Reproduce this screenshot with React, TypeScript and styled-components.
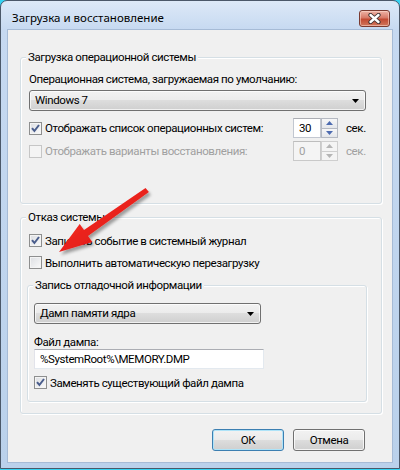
import React from 'react';
import styled, { createGlobalStyle } from 'styled-components';

const GlobalStyle = createGlobalStyle`
  html, body { margin: 0; padding: 0; }
  body {
    width: 400px;
    height: 470px;
    overflow: hidden;
    background: #35d3f2;
    font-family: Roboto, "Noto Sans", "Liberation Sans", sans-serif;
    font-size: 11.5px;
    letter-spacing: -0.4px;
    color: #000;
  }
  * { box-sizing: border-box; }
`;

const Page = styled.div`
  position: relative;
  width: 400px;
  height: 470px;
`;

const Window = styled.div`
  width: 400px;
  height: 469px;
  border: 1px solid #4b5869;
  border-radius: 7px 7px 0 0;
  background: linear-gradient(#dde9f7, #c6d9f1 29px, #bad1eb);
  display: flex;
  flex-direction: column;
  padding: 0 7px 6px 7px;
`;

const TitleBar = styled.div`
  height: 29px;
  display: flex;
  align-items: flex-start;
  justify-content: space-between;
  padding: 9px 2px 0 4px;
`;

const Title = styled.div`
  font-family: "Noto Sans", sans-serif;
  font-size: 11.5px;
  letter-spacing: 0;
  line-height: 16px;
  color: #000;
`;

const CloseButton = styled.div`
  width: 31px;
  height: 17px;
  border: 1px solid #7a3a30;
  border-radius: 3px;
  background: linear-gradient(#eeb3a6, #d77a68 45%, #c24a33 55%, #d0765c);
  box-shadow: inset 0 0 0 1px rgba(255, 220, 210, 0.55);
  display: flex;
  align-items: center;
  justify-content: center;
`;

const Content = styled.div`
  flex: 1;
  background: #f0f0f0;
  box-shadow: 0 0 0 1px #a6bbd6;
  display: flex;
  flex-direction: column;
  padding: 27px 10px 11px 12px;
`;

const GroupBox = styled.div<{ $mt?: number }>`
  margin-top: ${({ $mt }) => $mt ?? 0}px;
  border: 1px solid #d5dfe5;
  border-radius: 3px;
  box-shadow: inset 1px 1px 0 #fff, 1px 1px 0 #fff;
  display: flex;
  flex-direction: column;
`;

const Legend = styled.div`
  align-self: flex-start;
  margin: -8px 0 0 5px;
  padding: 0 2px;
  background: #f0f0f0;
  line-height: 15px;
`;

const GroupBody = styled.div<{ $pad: string }>`
  display: flex;
  flex-direction: column;
  padding: ${({ $pad }) => $pad};
`;

const Label = styled.div<{ $mt?: number; $lh?: number }>`
  margin-top: ${({ $mt }) => $mt ?? 0}px;
  line-height: ${({ $lh }) => $lh ?? 15}px;
  height: ${({ $lh }) => $lh ?? 15}px;
  white-space: nowrap;
`;

const Select = styled.div<{ $width: number; $mt?: number }>`
  margin-top: ${({ $mt }) => $mt ?? 0}px;
  width: ${({ $width }) => $width}px;
  height: 21px;
  border: 1px solid #707070;
  border-radius: 3px;
  background: linear-gradient(#f2f2f2, #ebebeb 50%, #dddddd 50%, #cfcfcf);
  box-shadow: inset 0 0 0 1px rgba(255, 255, 255, 0.7);
  display: flex;
  align-items: center;
  justify-content: space-between;
  padding: 0 6px 0 5px;
  line-height: 15px;
`;

const SpinRow = styled.div<{ $mt?: number; $disabled?: boolean }>`
  margin-top: ${({ $mt }) => $mt ?? 0}px;
  height: 20px;
  display: flex;
  align-items: center;
  color: ${({ $disabled }) => ($disabled ? '#a0a0a0' : '#000')};
`;

const SpinLabel = styled.div`
  flex: 0 0 264px;
  display: flex;
  align-items: center;
  white-space: nowrap;
`;

const Spinner = styled.div`
  display: flex;
  height: 20px;
`;

const SpinField = styled.div<{ $disabled?: boolean }>`
  width: 28px;
  height: 20px;
  background: ${({ $disabled }) => ($disabled ? '#f4f4f4' : '#fff')};
  border: 1px solid ${({ $disabled }) => ($disabled ? '#c9c9c9' : '#c2c7d0')};
  border-top-color: ${({ $disabled }) => ($disabled ? '#bdbdbd' : '#abadb3')};
  padding-left: 5px;
  line-height: 18px;
`;

const SpinButtons = styled.div`
  width: 17px;
  display: flex;
  flex-direction: column;
`;

const SpinButton = styled.div<{ $disabled?: boolean }>`
  flex: 1;
  border: 1px solid ${({ $disabled }) => ($disabled ? '#cfcfcf' : '#b5b9c2')};
  background: ${({ $disabled }) =>
    $disabled ? '#f4f4f4' : 'linear-gradient(#f7f7f8, #e4e6ea)'};
  display: flex;
  align-items: center;
  justify-content: center;
  & + & { border-top: none; }
`;

const Unit = styled.div`
  margin-left: 8px;
`;

const CheckRow = styled.div<{ $mt?: number; $ml?: number }>`
  margin-top: ${({ $mt }) => $mt ?? 0}px;
  margin-left: ${({ $ml }) => $ml ?? 0}px;
  height: 15px;
  display: flex;
  align-items: center;
  white-space: nowrap;
`;

const Box = styled.span<{ $disabled?: boolean }>`
  flex: 0 0 13px;
  width: 13px;
  height: 13px;
  border: 1px solid ${({ $disabled }) => ($disabled ? '#c6c6c6' : '#8e8f8f')};
  background: ${({ $disabled }) =>
    $disabled ? '#f4f4f4' : 'linear-gradient(135deg, #dcdee2, #fafafa)'};
  box-shadow: inset 0 0 0 1px #f4f4f4;
  margin-right: 3px;
  display: flex;
  align-items: center;
  justify-content: center;
`;

const TextInput = styled.div<{ $width: number }>`
  width: ${({ $width }) => $width}px;
  height: 20px;
  background: #fff;
  border: 1px solid #e3e9ef;
  border-top-color: #abadb3;
  border-left-color: #e2e3ea;
  padding-left: 5px;
  line-height: 18px;
  white-space: nowrap;
`;

const ButtonRow = styled.div`
  margin-top: 15px;
  display: flex;
  justify-content: flex-end;
  gap: 9px;
  padding-right: 17px;
`;

const Button = styled.div<{ $default?: boolean }>`
  width: 72px;
  height: 22px;
  border: 1px solid ${({ $default }) => ($default ? '#3c7fb1' : '#707070')};
  border-radius: 3px;
  background: linear-gradient(#f2f2f2, #ebebeb 50%, #dddddd 50%, #cfcfcf);
  box-shadow: inset 0 0 0 1px
    ${({ $default }) => ($default ? '#aee3f8' : 'rgba(255, 255, 255, 0.75)')};
  display: flex;
  align-items: center;
  justify-content: center;
  line-height: 15px;
`;

const Overlay = styled.svg`
  position: absolute;
  left: 0;
  top: 0;
  pointer-events: none;
`;

const Check = () => (
  <svg width="9" height="9" viewBox="0 0 9 9">
    <path d="M1 4.2 L3.4 7 L8 1" fill="none" stroke="#4a5d8c" strokeWidth="2" strokeLinejoin="miter" />
  </svg>
);

const Checkbox: React.FC<{ checked?: boolean; disabled?: boolean }> = ({ checked, disabled }) => (
  <Box $disabled={disabled}>{checked && <Check />}</Box>
);

const DropArrow = () => (
  <svg width="7" height="4" viewBox="0 0 7 4">
    <polygon points="0,0 7,0 3.5,4" fill="#000" />
  </svg>
);

const SpinArrow: React.FC<{ up?: boolean; disabled?: boolean }> = ({ up, disabled }) => (
  <svg width="7" height="4" viewBox="0 0 7 4">
    <polygon
      points={up ? '0,4 7,4 3.5,0' : '0,0 7,0 3.5,4'}
      fill={disabled ? '#b5b5b5' : '#4d6bb0'}
    />
  </svg>
);

const SpinBox: React.FC<{ value: string; disabled?: boolean }> = ({ value, disabled }) => (
  <Spinner>
    <SpinField $disabled={disabled}>{value}</SpinField>
    <SpinButtons>
      <SpinButton $disabled={disabled}>
        <SpinArrow up disabled={disabled} />
      </SpinButton>
      <SpinButton $disabled={disabled}>
        <SpinArrow disabled={disabled} />
      </SpinButton>
    </SpinButtons>
  </Spinner>
);

const App: React.FC = () => {
  return (
    <Page>
      <GlobalStyle />
      <Window>
        <TitleBar>
          <Title>Загрузка и восстановление</Title>
          <CloseButton>
            <svg width="13" height="11" viewBox="0 0 13 11">
              <path d="M2.5 2 L10.5 9 M10.5 2 L2.5 9" stroke="#3a3030" strokeWidth="4.2" strokeLinecap="round" />
              <path d="M2.5 2 L10.5 9 M10.5 2 L2.5 9" stroke="#fff" strokeWidth="2.4" strokeLinecap="round" />
            </svg>
          </CloseButton>
        </TitleBar>
        <Content>
          <GroupBox>
            <Legend>Загрузка операционной системы</Legend>
            <GroupBody $pad="7px 15px 42px 8px">
              <Label>Операционная система, загружаемая по умолчанию:</Label>
              <Select $width={337} $mt={3}>
                <span>Windows 7</span>
                <DropArrow />
              </Select>
              <SpinRow $mt={7}>
                <SpinLabel>
                  <Checkbox checked />
                  Отображать список операционных систем:
                </SpinLabel>
                <SpinBox value="30" />
                <Unit>сек.</Unit>
              </SpinRow>
              <SpinRow $mt={3} $disabled>
                <SpinLabel>
                  <Checkbox disabled />
                  Отображать варианты восстановления:
                </SpinLabel>
                <SpinBox value="0" disabled />
                <Unit>сек.</Unit>
              </SpinRow>
            </GroupBody>
          </GroupBox>

          <GroupBox $mt={13}>
            <Legend>Отказ системы</Legend>
            <GroupBody $pad="8px 14px 11px 6px">
              <CheckRow $ml={2}>
                <Checkbox checked />
                Записать событие в системный журнал
              </CheckRow>
              <CheckRow $ml={2} $mt={7}>
                <Checkbox />
                Выполнить автоматическую перезагрузку
              </CheckRow>
              <GroupBox $mt={15}>
                <Legend>Запись отладочной информации</Legend>
                <GroupBody $pad="10px 6px 11px 6px">
                  <Select $width={227}>
                    <span>Дамп памяти ядра</span>
                    <DropArrow />
                  </Select>
                  <Label $mt={11} $lh={14}>Файл дампа:</Label>
                  <TextInput $width={230}>%SystemRoot%\MEMORY.DMP</TextInput>
                  <CheckRow $mt={6}>
                    <Checkbox checked />
                    Заменять существующий файл дампа
                  </CheckRow>
                </GroupBody>
              </GroupBox>
            </GroupBody>
          </GroupBox>

          <ButtonRow>
            <Button $default>ОК</Button>
            <Button>Отмена</Button>
          </ButtonRow>
        </Content>
      </Window>

      <Overlay width="400" height="470" viewBox="0 0 400 470">
        <defs>
          <filter id="arrowShadow" x="-20%" y="-20%" width="140%" height="140%">
            <feDropShadow dx="2" dy="3" stdDeviation="1.6" floodColor="#000" floodOpacity="0.35" />
          </filter>
          <linearGradient id="arrowFill" x1="0" y1="0" x2="1" y2="1">
            <stop offset="0" stopColor="#ff3b2f" />
            <stop offset="1" stopColor="#d50a0a" />
          </linearGradient>
        </defs>
        <polygon
          points="145.5,187.9 84,230.1 79.7,224 59,252 92.3,242 88,235.9 148.9,192.1"
          fill="url(#arrowFill)"
          filter="url(#arrowShadow)"
          strokeLinejoin="round"
        />
      </Overlay>
    </Page>
  );
};

export default App;
